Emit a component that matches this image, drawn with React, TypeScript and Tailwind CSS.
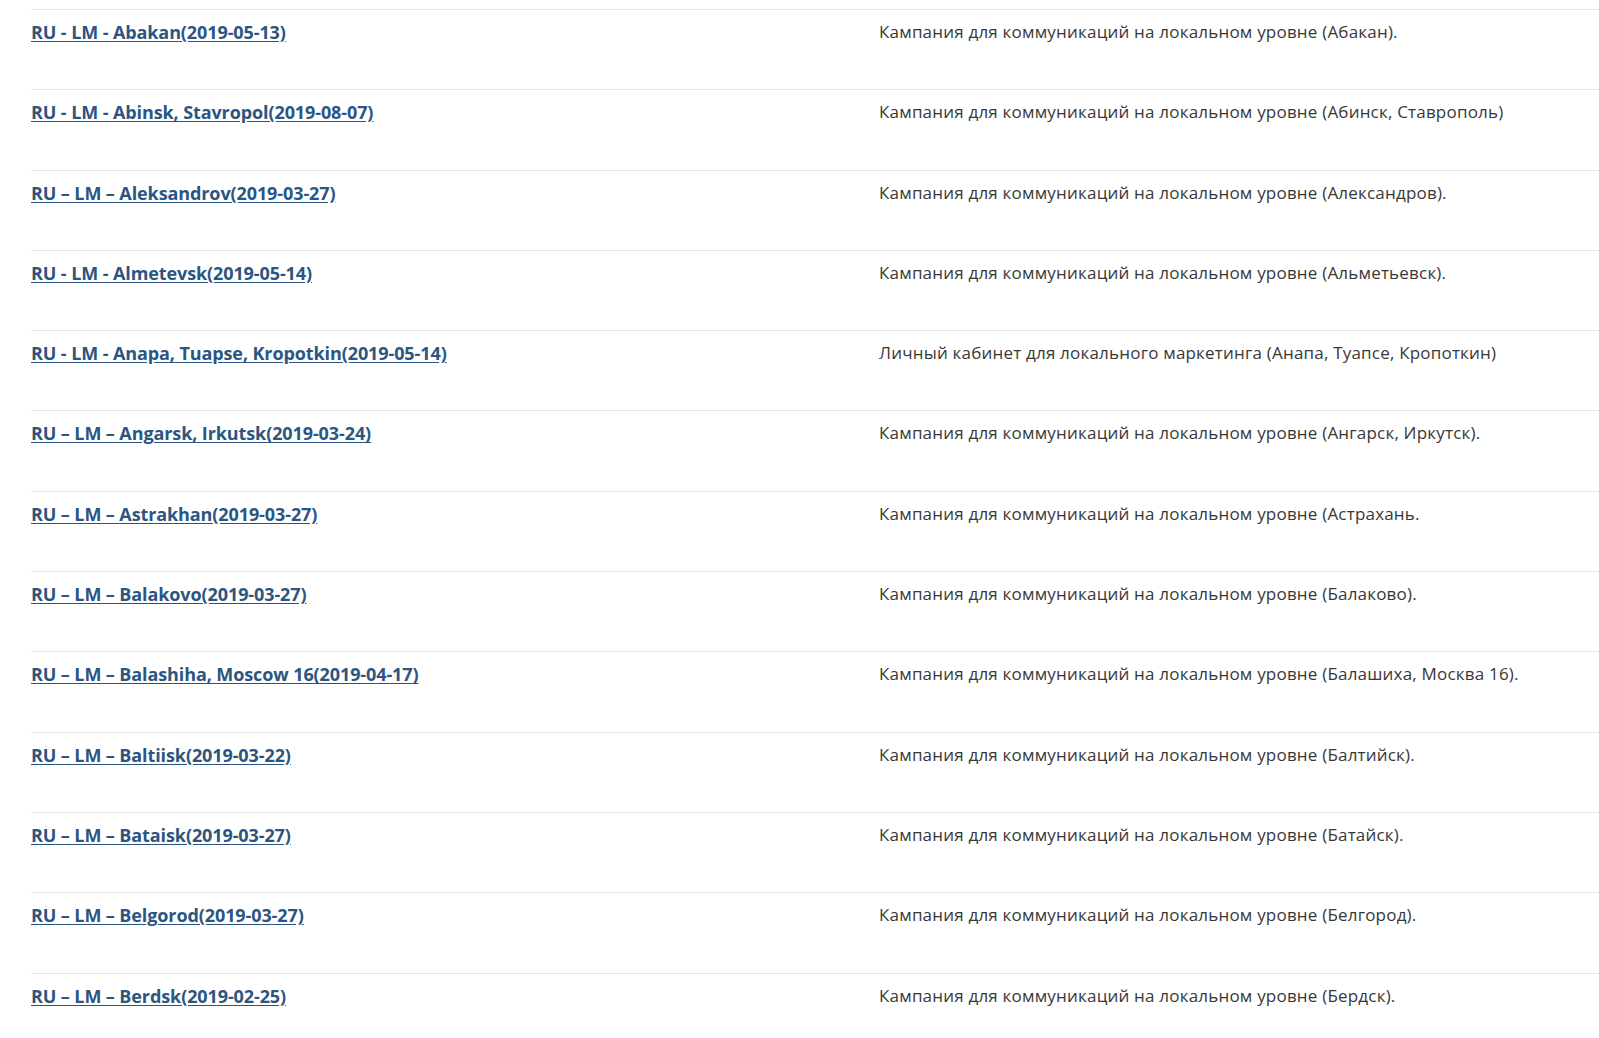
import React from 'react';

const rows: [string, string][] = [
  ['RU - LM - Abakan(2019-05-13)', 'Кампания для коммуникаций на локальном уровне (Абакан).'],
  ['RU - LM - Abinsk, Stavropol(2019-08-07)', 'Кампания для коммуникаций на локальном уровне (Абинск, Ставрополь)'],
  ['RU – LM – Aleksandrov(2019-03-27)', 'Кампания для коммуникаций на локальном уровне (Александров).'],
  ['RU - LM - Almetevsk(2019-05-14)', 'Кампания для коммуникаций на локальном уровне (Альметьевск).'],
  ['RU - LM - Anapa, Tuapse, Kropotkin(2019-05-14)', 'Личный кабинет для локального маркетинга (Анапа, Туапсе, Кропоткин)'],
  ['RU – LM – Angarsk, Irkutsk(2019-03-24)', 'Кампания для коммуникаций на локальном уровне (Ангарск, Иркутск).'],
  ['RU – LM – Astrakhan(2019-03-27)', 'Кампания для коммуникаций на локальном уровне (Астрахань.'],
  ['RU – LM – Balakovo(2019-03-27)', 'Кампания для коммуникаций на локальном уровне (Балаково).'],
  ['RU – LM – Balashiha, Moscow 16(2019-04-17)', 'Кампания для коммуникаций на локальном уровне (Балашиха, Москва 16).'],
  ['RU – LM – Baltiisk(2019-03-22)', 'Кампания для коммуникаций на локальном уровне (Балтийск).'],
  ['RU – LM – Bataisk(2019-03-27)', 'Кампания для коммуникаций на локальном уровне (Батайск).'],
  ['RU – LM – Belgorod(2019-03-27)', 'Кампания для коммуникаций на локальном уровне (Белгород).'],
  ['RU – LM – Berdsk(2019-02-25)', 'Кампания для коммуникаций на локальном уровне (Бердск).'],
];

export default function App() {
  return (
    <div className="min-h-screen bg-white pt-[9px] pl-[31px] overflow-hidden font-['Open_Sans',sans-serif]">
      {rows.map(([title, desc]) => (
        <div key={title} className="flex items-start h-[80.3px] border-t border-[#e6e6e6] pt-[9px]">
          <div className="w-[848px] shrink-0 leading-[26px]">
            <a href="#" className="text-[18px] font-bold text-[#2c5581] underline underline-offset-2 tracking-[-0.1px]">
              {title}
            </a>
          </div>
          <div className="text-[17px] leading-[26px] text-[#383838] tracking-[0.2px]">{desc}</div>
        </div>
      ))}
    </div>
  );
}
